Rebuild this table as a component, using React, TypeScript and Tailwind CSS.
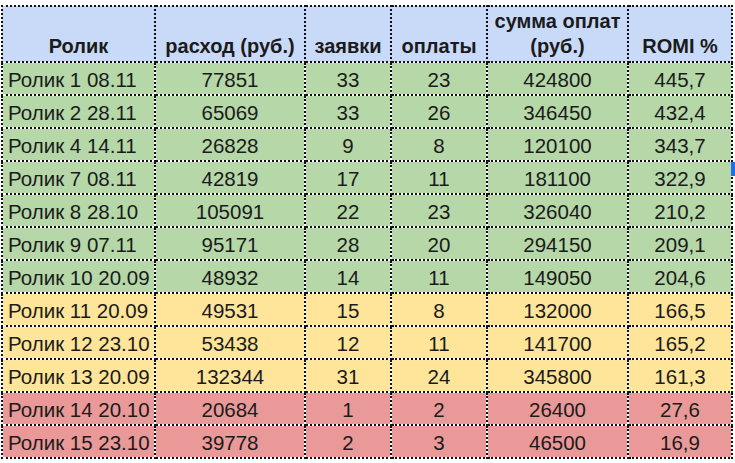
import React from 'react';

interface Row {
  name: string;
  spend: number;
  leads: number;
  paid: number;
  revenue: number;
  romi: string;
  tone: 'green' | 'yellow' | 'red';
}

const rows: Row[] = [
  { name: 'Ролик 1 08.11', spend: 77851, leads: 33, paid: 23, revenue: 424800, romi: '445,7', tone: 'green' },
  { name: 'Ролик 2 28.11', spend: 65069, leads: 33, paid: 26, revenue: 346450, romi: '432,4', tone: 'green' },
  { name: 'Ролик 4 14.11', spend: 26828, leads: 9, paid: 8, revenue: 120100, romi: '343,7', tone: 'green' },
  { name: 'Ролик 7 08.11', spend: 42819, leads: 17, paid: 11, revenue: 181100, romi: '322,9', tone: 'green' },
  { name: 'Ролик 8 28.10', spend: 105091, leads: 22, paid: 23, revenue: 326040, romi: '210,2', tone: 'green' },
  { name: 'Ролик 9 07.11', spend: 95171, leads: 28, paid: 20, revenue: 294150, romi: '209,1', tone: 'green' },
  { name: 'Ролик 10 20.09', spend: 48932, leads: 14, paid: 11, revenue: 149050, romi: '204,6', tone: 'green' },
  { name: 'Ролик 11 20.09', spend: 49531, leads: 15, paid: 8, revenue: 132000, romi: '166,5', tone: 'yellow' },
  { name: 'Ролик 12 23.10', spend: 53438, leads: 12, paid: 11, revenue: 141700, romi: '165,2', tone: 'yellow' },
  { name: 'Ролик 13 20.09', spend: 132344, leads: 31, paid: 24, revenue: 345800, romi: '161,3', tone: 'yellow' },
  { name: 'Ролик 14 20.10', spend: 20684, leads: 1, paid: 2, revenue: 26400, romi: '27,6', tone: 'red' },
  { name: 'Ролик 15 23.10', spend: 39778, leads: 2, paid: 3, revenue: 46500, romi: '16,9', tone: 'red' },
];

const toneBg = {
  green: 'bg-[#b6d7a8]',
  yellow: 'bg-[#ffe599]',
  red: 'bg-[#ea9999]',
};

const cell = 'border-2 border-dotted border-[#111] h-[33px] p-0 pt-[3px] text-center leading-[24px] whitespace-nowrap overflow-hidden';
const head = 'border-2 border-dotted border-[#111] p-0 pb-[2px] text-center align-bottom font-bold text-[20px] leading-[25px] whitespace-nowrap';

export default function App() {
  return (
    <div className="w-[735px] h-[463px] overflow-hidden bg-white pl-[1px] pt-[5px] relative font-['Liberation_Sans',Arial,sans-serif] text-[#1b1b1b]">
      <table className="border-collapse table-fixed">
        <colgroup>
          <col className="w-[153px]" />
          <col className="w-[150px]" />
          <col className="w-[86px]" />
          <col className="w-[96px]" />
          <col className="w-[141px]" />
          <col className="w-[104px]" />
        </colgroup>
        <thead>
          <tr className="bg-[#c9daf8] h-[56px]">
            <th className={head}>Ролик</th>
            <th className={head}>расход (руб.)</th>
            <th className={head}>заявки</th>
            <th className={head}>оплаты</th>
            <th className={head}>
              сумма оплат
              <br />
              (руб.)
            </th>
            <th className={head}>ROMI %</th>
          </tr>
        </thead>
        <tbody className="text-[20.5px]">
          {rows.map((r) => (
            <tr key={r.name} className={toneBg[r.tone]}>
              <td className={`${cell} text-left pl-[5px]`}>{r.name}</td>
              <td className={cell}>{r.spend}</td>
              <td className={cell}>{r.leads}</td>
              <td className={cell}>{r.paid}</td>
              <td className={cell}>{r.revenue}</td>
              <td className={cell}>{r.romi}</td>
            </tr>
          ))}
        </tbody>
      </table>
      <div className="absolute right-0 top-[162px] w-[4px] h-[14px] bg-[#1a73e8]" />
    </div>
  );
}
